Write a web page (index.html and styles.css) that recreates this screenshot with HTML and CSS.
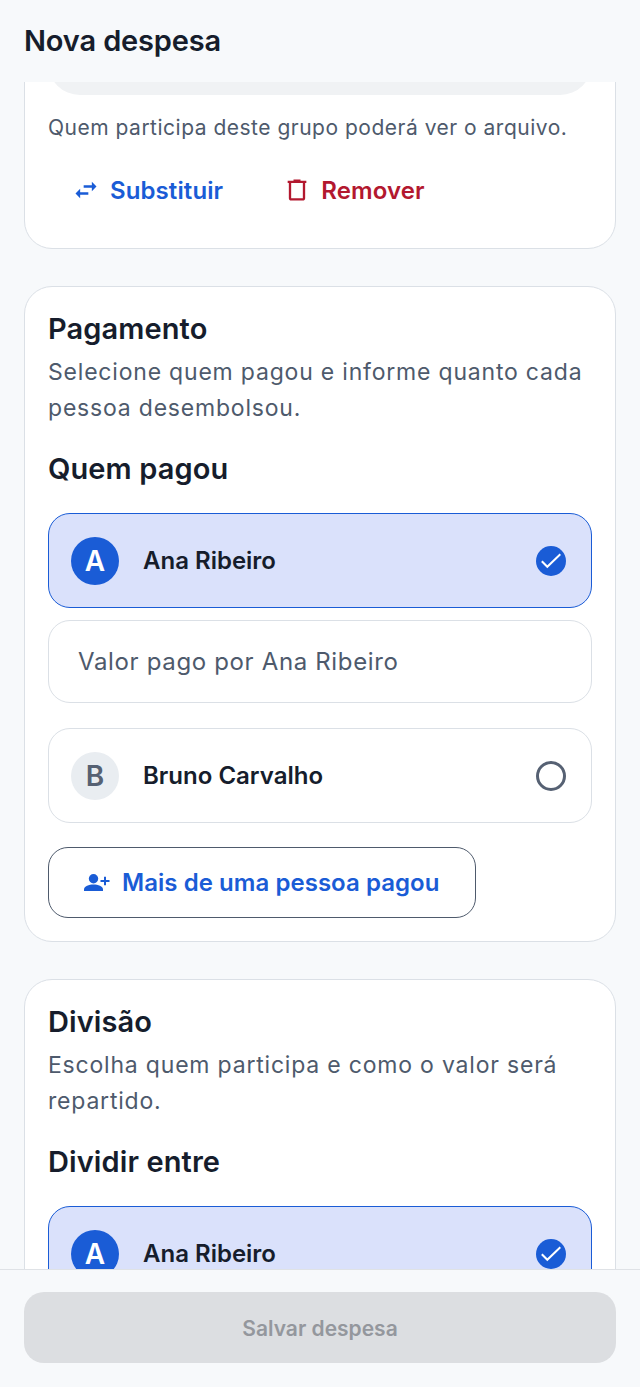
FILE: index.html
```html
<!DOCTYPE html>
<html lang="pt-BR">
<head>
    <meta charset="UTF-8">
    <meta name="viewport" content="width=device-width, initial-scale=1.0">
    <title>Nova despesa</title>
    <link rel="stylesheet" href="styles.css">
</head>
<body>
    <div class="app">
        <header class="top-bar">
            <h1>Nova despesa</h1>
        </header>
        <main class="content">
            <div class="scroll">
                <section class="card card-file">
                    <div class="preview"></div>
                    <p class="hint">Quem participa deste grupo poderá ver o arquivo.</p>
                    <div class="file-actions">
                        <button type="button" class="link-btn link-blue">
                            <svg width="28" height="28" viewBox="0 0 24 24" fill="currentColor"><path d="M6.99 11 3 15l3.99 4v-3H14v-2H6.99v-3zM21 9l-3.99-4v3H10v2h7.01v3L21 9z"/></svg>
                            Substituir
                        </button>
                        <button type="button" class="link-btn link-red">
                            <svg width="28" height="28" viewBox="0 0 24 24" fill="currentColor"><path d="M15 4V3H9v1H4v2h1v13c0 1.1.9 2 2 2h10c1.1 0 2-.9 2-2V6h1V4h-5zm2 15H7V6h10v13z"/></svg>
                            Remover
                        </button>
                    </div>
                </section>

                <section class="card">
                    <h2>Pagamento</h2>
                    <p class="hint">Selecione quem pagou e informe quanto cada pessoa desembolsou.</p>
                    <h3>Quem pagou</h3>
                    <div class="person selected">
                        <span class="avatar">A</span>
                        <span class="name">Ana Ribeiro</span>
                        <svg class="mark" width="32" height="32" viewBox="0 0 32 32"><circle cx="16" cy="16" r="15" fill="#1a5cd6"/><path d="M6.800 16.300l5.500 5.500 13-12.500" fill="none" stroke="#fff" stroke-width="2"/></svg>
                    </div>
                    <div class="amount">Valor pago por Ana Ribeiro</div>
                    <div class="person">
                        <span class="avatar">B</span>
                        <span class="name">Bruno Carvalho</span>
                        <svg class="mark" width="32" height="32" viewBox="0 0 32 32"><circle cx="16" cy="16" r="13.500" fill="none" stroke="#566173" stroke-width="3"/></svg>
                    </div>
                    <button type="button" class="outline-btn">
                        <svg width="26" height="18" viewBox="0 0 26 18" fill="currentColor"><circle cx="9.500" cy="4.800" r="4.700"/><path d="M0 17v-1.500C0 12 5 10.500 9.500 10.500S19 12 19 15.500V17z"/><path d="M16.500 6h3.500V2.800h2V6h3.500v2h-3.500v3.200h-2V8h-3.500z"/></svg>
                        Mais de uma pessoa pagou
                    </button>
                </section>

                <section class="card">
                    <h2>Divisão</h2>
                    <p class="hint">Escolha quem participa e como o valor será repartido.</p>
                    <h3>Dividir entre</h3>
                    <div class="person selected">
                        <span class="avatar">A</span>
                        <span class="name">Ana Ribeiro</span>
                        <svg class="mark" width="32" height="32" viewBox="0 0 32 32"><circle cx="16" cy="16" r="15" fill="#1a5cd6"/><path d="M6.800 16.300l5.500 5.500 13-12.500" fill="none" stroke="#fff" stroke-width="2"/></svg>
                    </div>
                </section>
            </div>
        </main>
        <footer class="bottom-bar">
            <button type="button" class="save-btn" disabled>Salvar despesa</button>
        </footer>
    </div>
</body>
</html>
```

FILE: styles.css
```css
* {
    box-sizing: border-box;
}
body {
    margin: 0;
    font-family: Inter, "Noto Sans", sans-serif;
    background-color: #f7f9fb;
    color: #161d2c;
}
button {
    font-family: inherit;
}
.app {
    display: flex;
    flex-direction: column;
    height: 100vh;
    overflow: hidden;
}
.top-bar {
    flex: none;
    height: 82px;
    padding: 23px 24px 0;
}
.top-bar h1 {
    margin: 0;
    font-size: 29px;
    line-height: 36px;
    font-weight: 600;
    letter-spacing: -0.15px;
}
.content {
    flex: 1;
    min-height: 0;
    overflow: hidden;
}
/* the page is scrolled: the first card starts above the visible area */
.scroll {
    display: flex;
    flex-direction: column;
    gap: 37px;
    margin-top: -100px;
    padding: 0 24px;
}
.card {
    background: #fff;
    border: 1px solid #dbe0e6;
    border-radius: 28px;
    padding: 24px 23px 23px;
}
.card-file {
    height: 267px;
}
.preview {
    height: 88px;
    margin-bottom: 15px;
    background: #f0f2f4;
    border-radius: 32px;
}
.hint {
    margin: 7px 0 0;
    font-size: 23px;
    line-height: 36px;
    color: #4e5a6c;
    letter-spacing: 0.8px;
}
.card-file .hint {
    margin-top: 0;
    font-size: 21px;
    letter-spacing: 0.5px;
}
.file-actions {
    display: flex;
    gap: 12px;
    margin-top: 16px;
}
.link-btn {
    display: flex;
    align-items: center;
    gap: 10px;
    height: 56px;
    padding: 0 24px;
    border: none;
    background: none;
    font-size: 24px;
    font-weight: 600;
    letter-spacing: 0.1px;
}
.link-blue {
    color: #1a5cd6;
}
.link-red {
    color: #b3182f;
}
.card h2 {
    margin: 0;
    font-size: 29px;
    line-height: 36px;
    font-weight: 600;
    letter-spacing: 0.1px;
}
.card h3 {
    margin: 25px 0 26px;
    font-size: 29px;
    line-height: 36px;
    font-weight: 600;
    letter-spacing: 0.1px;
}
.person {
    display: flex;
    align-items: center;
    gap: 24px;
    height: 95px;
    padding: 0 24px 0 22px;
    border: 1px solid #dbe0e6;
    border-radius: 22px;
    margin-top: 25px;
}
.person.selected {
    background: #dae1fb;
    border-color: #1a5cd6;
    margin-top: 0;
}
.avatar {
    display: flex;
    align-items: center;
    justify-content: center;
    width: 48px;
    height: 48px;
    border-radius: 50%;
    background: #e9edf1;
    color: #566173;
    font-size: 28px;
    font-weight: 600;
}
.selected .avatar {
    background: #1a5cd6;
    color: #fff;
}
.name {
    flex: 1;
    font-size: 24px;
    font-weight: 600;
}
.amount {
    display: flex;
    align-items: center;
    height: 83px;
    margin-top: 12px;
    padding: 0 29px;
    border: 1px solid #dbe0e6;
    border-radius: 22px;
    font-size: 24px;
    letter-spacing: 0.65px;
    color: #4e5a6c;
}
.outline-btn {
    display: flex;
    align-items: center;
    gap: 12px;
    height: 71px;
    margin-top: 24px;
    padding: 0 35px;
    background: #fff;
    border: 1px solid #4e5a6c;
    border-radius: 20px;
    color: #1a5cd6;
    font-size: 24px;
    font-weight: 600;
    letter-spacing: 0.05px;
}
.bottom-bar {
    flex: none;
    height: 118px;
    padding: 22px 24px 0;
    background: #f7f9fb;
    border-top: 1px solid #dfe2e6;
}
.save-btn {
    display: block;
    width: 100%;
    height: 71px;
    padding-top: 2px;
    border: none;
    border-radius: 20px;
    background: #dcdee1;
    color: #94979d;
    font-size: 21px;
    font-weight: 600;
}
```
